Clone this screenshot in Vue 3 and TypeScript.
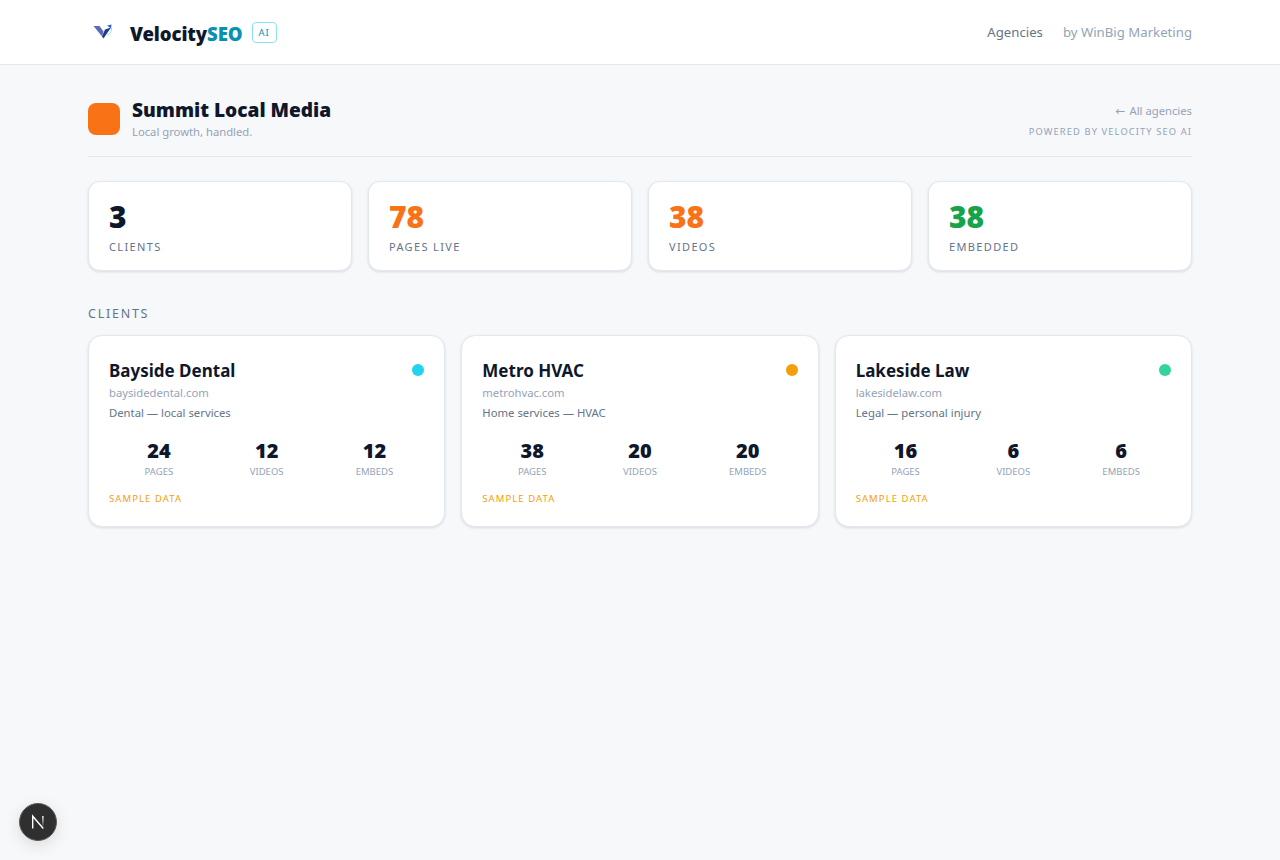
<script setup lang="ts">
interface Stat {
  value: number;
  label: string;
  tone: string;
}

interface Client {
  name: string;
  domain: string;
  niche: string;
  dot: string;
  pages: number;
  videos: number;
  embeds: number;
}

const stats: Stat[] = [
  { value: 3, label: 'Clients', tone: 'navy' },
  { value: 78, label: 'Pages live', tone: 'orange' },
  { value: 38, label: 'Videos', tone: 'orange' },
  { value: 38, label: 'Embedded', tone: 'green' },
];

const clients: Client[] = [
  { name: 'Bayside Dental', domain: 'baysidedental.com', niche: 'Dental — local services', dot: '#22d3ee', pages: 24, videos: 12, embeds: 12 },
  { name: 'Metro HVAC', domain: 'metrohvac.com', niche: 'Home services — HVAC', dot: '#f59e0b', pages: 38, videos: 20, embeds: 20 },
  { name: 'Lakeside Law', domain: 'lakesidelaw.com', niche: 'Legal — personal injury', dot: '#34d399', pages: 16, videos: 6, embeds: 6 },
];
</script>

<template>
  <div class="page">
    <header class="topbar">
      <div class="brand">
        <svg class="brand-mark" width="22" height="22" viewBox="0 0 22 22">
          <path d="M1.5 5 H7.5 L11.5 10.5 L10 15.5 Z" fill="#5b6bb5" />
          <path d="M10 15.5 L11.5 17.5 L19 6.5 L13 8.5 Z" fill="#1e3a8a" />
          <path d="M15 4.5 L19.5 3.5 L19 7.5 Z" fill="#2563eb" />
          <path d="M19.5 7 Q20 12 15 14.5" fill="none" stroke="#7dd3fc" stroke-width="0.8" />
        </svg>
        <span class="brand-name">Velocity<span class="brand-accent">SEO</span></span>
        <span class="brand-tag">AI</span>
      </div>
      <nav class="topnav">
        <a class="nav-link">Agencies</a>
        <a class="nav-by">by WinBig Marketing</a>
      </nav>
    </header>

    <main class="content">
      <section class="agency">
        <div class="agency-main">
          <div class="agency-logo"></div>
          <div>
            <h1 class="agency-name">Summit Local Media</h1>
            <p class="agency-tagline">Local growth, handled.</p>
          </div>
        </div>
        <div class="agency-side">
          <a class="back-link"><span class="back-arrow">←</span> All agencies</a>
          <span class="powered">Powered by Velocity SEO AI</span>
        </div>
      </section>

      <section class="stats">
        <div v-for="stat in stats" :key="stat.label + stat.value" class="stat-card">
          <div class="stat-value" :class="stat.tone">{{ stat.value }}</div>
          <div class="stat-label">{{ stat.label }}</div>
        </div>
      </section>

      <h2 class="section-title">Clients</h2>

      <section class="clients">
        <article v-for="client in clients" :key="client.domain" class="client-card">
          <div class="client-head">
            <h3 class="client-name">{{ client.name }}</h3>
            <span class="client-dot" :style="{ background: client.dot }"></span>
          </div>
          <div class="client-domain">{{ client.domain }}</div>
          <div class="client-niche">{{ client.niche }}</div>
          <div class="client-metrics">
            <div class="metric">
              <div class="metric-value">{{ client.pages }}</div>
              <div class="metric-label">Pages</div>
            </div>
            <div class="metric">
              <div class="metric-value">{{ client.videos }}</div>
              <div class="metric-label">Videos</div>
            </div>
            <div class="metric">
              <div class="metric-value">{{ client.embeds }}</div>
              <div class="metric-label">Embeds</div>
            </div>
          </div>
          <div class="sample">Sample data</div>
        </article>
      </section>
    </main>

    <button class="dev-badge" type="button">
      <svg width="16" height="16" viewBox="0 0 16 16">
        <defs>
          <linearGradient id="stem" x1="0" y1="0" x2="0" y2="1">
            <stop offset="0" stop-color="#fff" />
            <stop offset="1" stop-color="#fff" stop-opacity="0.15" />
          </linearGradient>
        </defs>
        <path d="M2.7 14.5 V2.2 L13.3 14.5" fill="none" stroke="#fff" stroke-width="1.4" />
        <rect x="12.2" y="2" width="1.4" height="10" fill="url(#stem)" />
      </svg>
    </button>
  </div>
</template>

<style>
body {
  background: #f6f8fa;
}
</style>

<style scoped>
.page {
  min-height: 860px;
  background: #f6f8fa;
  font-family: "Noto Sans", sans-serif;
  color: #0f172a;
}

.topbar {
  height: 65px;
  box-sizing: border-box;
  background: #fff;
  border-bottom: 1px solid #e2e8f0;
  padding: 0 88px;
  display: flex;
  align-items: center;
  justify-content: space-between;
}

.brand {
  display: flex;
  align-items: center;
}

.brand-mark {
  margin-left: 4px;
  margin-right: 16px;
}

.brand-name {
  padding-top: 2px;
  font-size: 18.6px;
  font-weight: 900;
  letter-spacing: -0.1px;
  color: #0f172a;
}

.brand-accent {
  color: #0891b2;
}

.brand-tag {
  margin-left: 9px;
  padding: 2px 6px;
  border: 1px solid #8ae4f0;
  border-radius: 4px;
  font-size: 9.5px;
  letter-spacing: 0.9px;
  line-height: 15px;
  color: #0891b2;
}

.topnav {
  display: flex;
  gap: 20px;
  font-size: 13.2px;
}

.nav-link {
  color: #64748b;
}

.nav-by {
  color: #94a3b8;
}

.content {
  padding: 0 88px;
}

.agency {
  margin-top: 29px;
  height: 62px;
  border-bottom: 1px solid #e2e8f0;
  display: flex;
  justify-content: space-between;
}

.agency-main {
  display: flex;
  gap: 12px;
  padding-top: 3px;
}

.agency-logo {
  width: 32px;
  height: 32px;
  margin-top: 6px;
  border-radius: 8px;
  background: #f97316;
}

.agency-name {
  margin: 0;
  font-size: 19.1px;
  line-height: 26px;
  font-weight: 900;
}

.agency-tagline {
  margin: 1px 0 0;
  font-size: 11.25px;
  line-height: 16px;
  color: #94a3b8;
}

.agency-side {
  display: flex;
  flex-direction: column;
  align-items: flex-end;
  gap: 6px;
  padding-top: 9px;
}

.back-link {
  font-size: 11.25px;
  line-height: 16px;
  color: #94a3b8;
}

.back-arrow {
  margin-right: 1px;
  font-family: "DejaVu Sans", sans-serif;
  font-size: 12px;
  line-height: 1;
}

.powered {
  font-size: 9.3px;
  line-height: 14px;
  letter-spacing: 1.12px;
  text-transform: uppercase;
  color: #94a3b8;
}

.stats {
  margin-top: 24px;
  display: grid;
  grid-template-columns: repeat(4, 1fr);
  gap: 16px;
}

.stat-card {
  height: 90px;
  box-sizing: border-box;
  padding: 19px 20px;
  background: #fff;
  border: 1px solid #e2e8f0;
  border-radius: 12px;
  box-shadow: 0 1px 3px rgba(15, 23, 42, 0.12);
}

.stat-value {
  font-size: 30px;
  line-height: 32px;
  font-weight: 900;
}

.stat-value.navy {
  color: #0f172a;
}

.stat-value.orange {
  color: #f97316;
}

.stat-value.green {
  color: #16a34a;
}

.stat-label {
  margin-top: 6px;
  font-size: 11px;
  line-height: 15px;
  letter-spacing: 1.35px;
  text-transform: uppercase;
  color: #64748b;
}

.section-title {
  margin: 35px 0 13px;
  font-size: 12.5px;
  line-height: 16px;
  font-weight: 400;
  letter-spacing: 1.75px;
  text-transform: uppercase;
  color: #64748b;
}

.clients {
  display: grid;
  grid-template-columns: repeat(3, 1fr);
  gap: 16px;
}

.client-card {
  height: 192px;
  box-sizing: border-box;
  padding: 21px 20px 20px;
  background: #fff;
  border: 1px solid #e2e8f0;
  border-radius: 14px;
  box-shadow: 0 1px 3px rgba(15, 23, 42, 0.12);
}

.client-head {
  display: flex;
  align-items: flex-start;
  justify-content: space-between;
}

.client-name {
  margin: 0;
  padding-top: 1px;
  font-size: 17px;
  line-height: 26px;
  font-weight: 700;
}

.client-dot {
  width: 12px;
  height: 12px;
  margin-top: 7px;
  border-radius: 50%;
}

.client-domain {
  margin-top: 1px;
  font-size: 11.25px;
  line-height: 16px;
  color: #94a3b8;
}

.client-niche {
  margin-top: 4px;
  font-size: 11.3px;
  line-height: 16px;
  color: #64748b;
}

.client-metrics {
  margin-top: 18px;
  display: grid;
  grid-template-columns: repeat(3, 1fr);
  gap: 8px;
  text-align: center;
}

.metric-value {
  font-size: 20px;
  line-height: 24px;
  font-weight: 900;
}

.metric-label {
  margin-top: 2px;
  font-size: 9.5px;
  line-height: 14px;
  text-transform: uppercase;
  color: #94a3b8;
}

.sample {
  margin-top: 13px;
  font-size: 9.5px;
  line-height: 13px;
  letter-spacing: 1.08px;
  text-transform: uppercase;
  color: #f59e0b;
}

.dev-badge {
  position: fixed;
  left: 19px;
  bottom: 19px;
  width: 38px;
  height: 38px;
  padding: 0;
  display: flex;
  align-items: center;
  justify-content: center;
  background: #2f2f2f;
  border: 1px solid #5a5a5a;
  border-radius: 50%;
  box-shadow: 0 4px 16px rgba(0, 0, 0, 0.12);
}
</style>
